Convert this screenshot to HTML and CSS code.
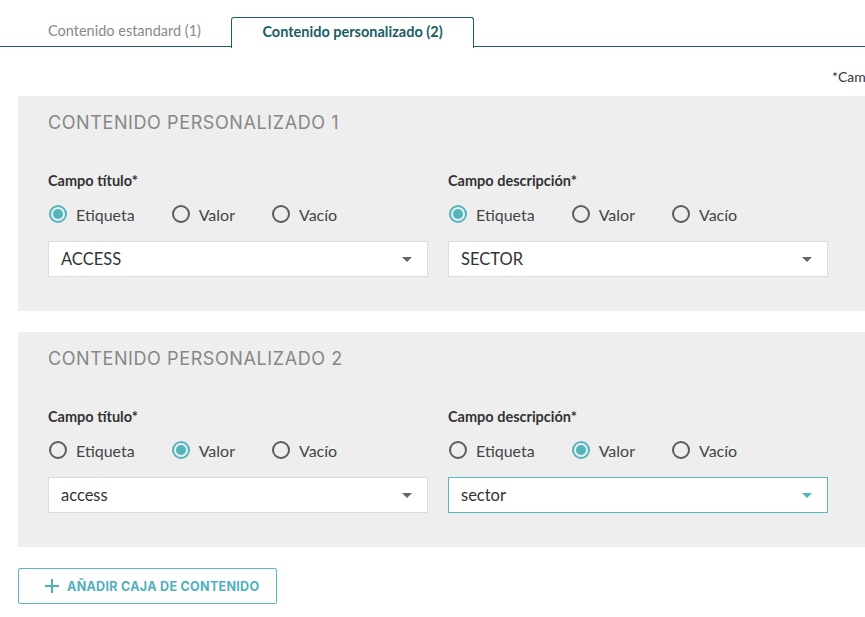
FILE: index.html
```html
<!DOCTYPE html>
<html lang="es">
<head>
	<meta charset="UTF-8">
	<meta name="viewport" content="width=device-width, initial-scale=1.0">
	<title>Contenido personalizado</title>
	<link rel="stylesheet" href="styles.css">
</head>
<body>
	<div class="page">
		<div class="tabs">
			<div class="tab">Contenido estandard (1)</div>
			<div class="tab tab-active">Contenido personalizado (2)</div>
		</div>

		<p class="note">*Campos obligatorios</p>

		<div class="box">
			<h2 class="box-title">CONTENIDO PERSONALIZADO 1</h2>
			<div class="fields">
				<div class="field">
					<div class="field-label">Campo título*</div>
					<div class="radios">
						<span class="radio checked"><span class="dot"></span>Etiqueta</span>
						<span class="radio"><span class="dot"></span>Valor</span>
						<span class="radio"><span class="dot"></span>Vacío</span>
					</div>
					<div class="select">ACCESS<span class="arrow"></span></div>
				</div>
				<div class="field">
					<div class="field-label">Campo descripción*</div>
					<div class="radios">
						<span class="radio checked"><span class="dot"></span>Etiqueta</span>
						<span class="radio"><span class="dot"></span>Valor</span>
						<span class="radio"><span class="dot"></span>Vacío</span>
					</div>
					<div class="select">SECTOR<span class="arrow"></span></div>
				</div>
			</div>
		</div>

		<div class="box">
			<h2 class="box-title">CONTENIDO PERSONALIZADO 2</h2>
			<div class="fields">
				<div class="field">
					<div class="field-label">Campo título*</div>
					<div class="radios">
						<span class="radio"><span class="dot"></span>Etiqueta</span>
						<span class="radio checked"><span class="dot"></span>Valor</span>
						<span class="radio"><span class="dot"></span>Vacío</span>
					</div>
					<div class="select">access<span class="arrow"></span></div>
				</div>
				<div class="field">
					<div class="field-label">Campo descripción*</div>
					<div class="radios">
						<span class="radio"><span class="dot"></span>Etiqueta</span>
						<span class="radio checked"><span class="dot"></span>Valor</span>
						<span class="radio"><span class="dot"></span>Vacío</span>
					</div>
					<div class="select select-focus">sector<span class="arrow"></span></div>
				</div>
			</div>
		</div>

		<button class="add-btn">
			<svg width="16" height="16" viewBox="0 0 16 16"><path d="M8 1v14M1 8h14" stroke="currentColor" stroke-width="2" fill="none"/></svg>
			AÑADIR CAJA DE CONTENIDO
		</button>
	</div>
</body>
</html>
```

FILE: styles.css
```css
html, body {
	margin: 0;
	overflow: hidden;
}

body {
	background-color: #fff;
	font-family: Lato, "Noto Sans", sans-serif;
	color: #333;
}

.page {
	width: 1000px;
}

.tabs {
	display: flex;
	padding: 17px 0 0 18px;
	border-bottom: 1.5px solid #1d5e6a;
	height: 29px;
}

.tab {
	width: 213px;
	text-align: center;
	font-size: 14.5px;
	line-height: 28px;
	color: #888;
}

.tab-active {
	width: 241px;
	color: #1a5c66;
	font-weight: 700;
	background-color: #fff;
	border: 1.5px solid #1d5e6a;
	border-bottom: none;
	border-radius: 3px 3px 0 0;
	height: 29.5px;
}

.note {
	margin: 22px 0 11px;
	padding-left: 832px;
	font-size: 14px;
	line-height: 16px;
	color: #333;
	white-space: nowrap;
}

.box {
	background-color: #eee;
	margin: 0 0 21px 18px;
	padding: 15px 30px 34px;
}

.box-title {
	margin: 0 0 37px;
	font-family: Inter, sans-serif;
	font-size: 18px;
	font-weight: 400;
	line-height: 24px;
	color: #878787;
	letter-spacing: 0.6px;
}

.fields {
	display: flex;
	gap: 20px;
}

.field {
	width: 380px;
}

.field-label {
	font-size: 14.5px;
	font-weight: 700;
	line-height: 18px;
	color: #333;
}

.radios {
	display: flex;
	gap: 36px;
	margin: 12px 0 15px;
	height: 24px;
	align-items: center;
}

.radio {
	display: flex;
	align-items: center;
	gap: 9px;
	font-size: 16px;
	color: #444;
}

.dot {
	width: 14px;
	height: 14px;
	margin-left: 1px;
	border: 2px solid #5c5c5c;
	border-radius: 50%;
	position: relative;
}

.radio.checked .dot {
	border-color: #52b4bd;
}

.radio.checked .dot::after {
	content: "";
	position: absolute;
	left: 2px;
	top: 2px;
	width: 10px;
	height: 10px;
	border-radius: 50%;
	background-color: #52b4bd;
}

.select {
	display: flex;
	align-items: center;
	justify-content: space-between;
	height: 34px;
	padding: 0 15px 0 12px;
	background-color: #fff;
	border: 1px solid #dcdcdc;
	font-size: 16.5px;
	color: #333;
}

.arrow {
	width: 0;
	height: 0;
	border-left: 5px solid transparent;
	border-right: 5px solid transparent;
	border-top: 5px solid #666;
}

.select-focus {
	border-color: #5ab8c0;
}

.select-focus .arrow {
	border-top-color: #52b4bd;
}

.add-btn {
	display: flex;
	align-items: center;
	gap: 7px;
	margin-left: 18px;
	width: 259px;
	height: 36px;
	padding: 0 0 0 25px;
	background-color: #fff;
	border: 1px solid #5ab8c0;
	border-radius: 2px;
	color: #4fb1bb;
	font-family: Inter, sans-serif;
	font-size: 12.5px;
	font-weight: 700;
	letter-spacing: 0.3px;
}
```
